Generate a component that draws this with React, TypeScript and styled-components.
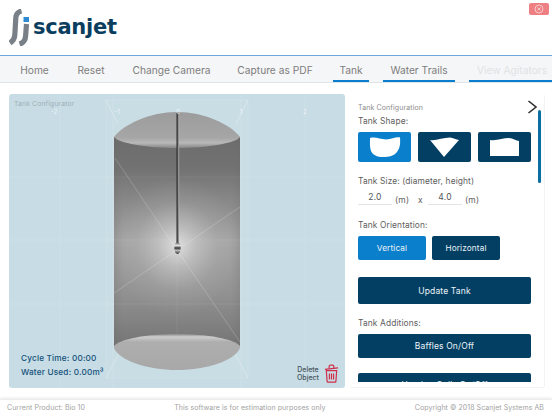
import React from "react";
import styled, { createGlobalStyle } from "styled-components";

const Global = createGlobalStyle`
  html, body { margin: 0; padding: 0; background: #fff; }
  body { font-family: "Inter", "Open Sans", sans-serif; overflow: hidden; }
  * { box-sizing: border-box; }
`;
const Page = styled.div`
  width: 552px; height: 414px; display: flex; flex-direction: column; background: #fff; overflow: hidden;
`;
const Header = styled.header`
  height: 55px; flex: none; display: flex; justify-content: space-between; align-items: flex-start;
  padding: 3px 3px 0 9px;
`;
const Logo = styled.div`
  display: flex; align-items: flex-start; padding-top: 6px; gap: 3px;
`;
const LogoText = styled.span`
  font-family: "DejaVu Sans", sans-serif; font-weight: 700; font-size: 21px; line-height: 24px;
  letter-spacing: -0.25px; color: #0b3e5e; margin-top: 6px;
`;
const CloseButton = styled.div`
  width: 20px; height: 12px; border-radius: 2px; background: #ee7f82; display: flex; align-items: center; justify-content: center;
`;
const Nav = styled.nav`
  height: 28px; flex: none; display: flex; gap: 14px; padding-left: 13px; overflow: hidden;
  background: #f5f6f7; border-top: 1px solid #6ea8d8; border-bottom: 1px solid #dce6eb;
`;
const Tab = styled.div<{ $active?: boolean; $dim?: boolean; $w: number }>`
  flex: none; width: ${p => p.$w}px; height: 27px; display: flex; align-items: center; justify-content: center;
  font-size: 10.2px; font-weight: 400; letter-spacing: 0.02px; white-space: nowrap; padding-top: 3px;
  color: ${p => (p.$dim ? "#dfe3e5" : "#7d7d7d")};
  border-bottom: 3px solid ${p => (p.$active ? "#0a7dcf" : "transparent")};
`;
const Main = styled.main`
  flex: none; height: 316px; padding: 11px 7px 0 9px; display: flex; gap: 4px;
`;
const Stage = styled.section`
  position: relative; width: 336px; height: 294px; border-radius: 3px; background: #c7dce4; overflow: hidden;
`;
const StageTitle = styled.div`
  position: absolute; left: 5px; top: 5px; font-size: 6.8px; font-weight: 400; letter-spacing: 0.15px; color: #9fb0b8;
`;
const Stats = styled.div`
  position: absolute; left: 12px; bottom: 10px; display: flex; flex-direction: column; gap: 3px;
  font-size: 8.2px; font-weight: 500; letter-spacing: 0.2px; line-height: 11px; color: #13517a;
`;
const DeleteBox = styled.div`
  position: absolute; right: 6px; bottom: 5px; display: flex; align-items: center; gap: 5px;
`;
const DeleteLabel = styled.div`
  font-size: 7px; font-weight: 500; line-height: 7.5px; text-align: center; color: #46545c;
`;
const Card = styled.aside`
  position: relative; width: 196px; height: 294px; border-radius: 3px; background: #fff;
  border-right: 1px solid #f2f3f4; border-bottom: 1px solid #f2f3f4;
  padding: 9px 0 0 9px;
`;
const ScrollArea = styled.div`
  height: 279px; overflow: hidden;
`;
const CardTitle = styled.div`
  font-size: 7px; font-weight: 400; letter-spacing: 0.12px; line-height: 9px; color: #8c8c8c;
`;
const Chevron = styled.div`
  position: absolute; right: 6px; top: 6px; line-height: 0;
`;
const Scrollbar = styled.div`
  position: absolute; left: 189px; top: 16px; width: 3px; height: 73px; border-radius: 2px; background: #0b6ea3;
`;
const Label = styled.div<{ $top: number }>`
  margin-top: ${p => p.$top}px; font-size: 8.4px; font-weight: 400; letter-spacing: 0.12px; line-height: 11px; color: #5e5e5e;
`;
const Shapes = styled.div`
  display: flex; gap: 7px; margin-top: 5px;
`;
const ShapeButton = styled.div<{ $active?: boolean }>`
  width: 53px; height: 30px; border-radius: 2px; display: flex; align-items: center; justify-content: center;
  background: ${p => (p.$active ? "#0a80cc" : "#033f63")};
`;
const SizeRow = styled.div`
  display: flex; align-items: flex-end; margin-top: 5px; height: 13px;
  font-size: 8.5px; font-weight: 400; color: #5e5e5e; letter-spacing: 0.2px;
`;
const SizeInput = styled.div`
  width: 34px; height: 13px; border-bottom: 1px solid #e4e4e4; text-align: center; line-height: 11px; color: #555;
`;
const Unit = styled.span<{ $w: number }>`
  width: ${p => p.$w}px; padding-left: 3px; line-height: 10px; flex: none;
`;
const Orientation = styled.div`
  display: flex; gap: 6px; margin-top: 5px;
`;
const ToggleButton = styled.div<{ $active?: boolean }>`
  width: 68px; height: 24px; border-radius: 2px; display: flex; align-items: center; justify-content: center;
  font-size: 8.2px; font-weight: 400; letter-spacing: 0.15px; color: #eaf3f8;
  background: ${p => (p.$active ? "#0a80cc" : "#033f63")};
`;
const WideButton = styled.div<{ $h: number; $top: number }>`
  width: 173px; height: ${p => p.$h}px; margin-top: ${p => p.$top}px; flex: none; border-radius: 2px;
  display: flex; align-items: center; justify-content: center;
  font-size: 8.5px; font-weight: 400; letter-spacing: 0.15px; color: #eaf3f8; background: #033f63;
`;
const Footer = styled.footer`
  flex: 1; display: flex; justify-content: space-between; align-items: center; padding: 0 8px 0 7px;
  box-shadow: 0 -1px 3px rgba(0,0,0,.09); border-top: 1px solid #ececec;
  font-size: 7px; letter-spacing: 0.06px; color: #a2a2a2;
`;

const LogoMark = () => (
  <svg width="21" height="37" viewBox="0 0 21 37">
    <path d="M12.5 2C8.5 3 7 5 6.8 9L5.8 26C5.6 30 4 32 1 34" fill="none" stroke="#7a8087" strokeWidth="5.2" />
    <path d="M17.5 15L16.6 27C16.3 31.5 14 34 10.5 35" fill="none" stroke="#7a8087" strokeWidth="5.2" />
    <rect x="14.5" y="8" width="5.5" height="5" fill="#2e8bd3" />
  </svg>
);

const Scene = () => (
  <svg width="336" height="294" viewBox="9 94 336 294" style={{ position: "absolute", left: 0, top: 0 }}>
    <defs>
      <linearGradient id="body" x1="0" y1="0" x2="0" y2="1">
        <stop offset="0" stopColor="#6c6c6c" />
        <stop offset=".15" stopColor="#727272" />
        <stop offset=".5" stopColor="#a6a6a6" />
        <stop offset=".75" stopColor="#929292" />
        <stop offset="1" stopColor="#747474" />
      </linearGradient>
      <linearGradient id="side" x1="0" y1="0" x2="1" y2="0">
        <stop offset="0" stopColor="#666" stopOpacity=".22" />
        <stop offset=".08" stopColor="#777" stopOpacity=".03" />
        <stop offset=".92" stopColor="#777" stopOpacity=".03" />
        <stop offset="1" stopColor="#666" stopOpacity=".22" />
      </linearGradient>
      <radialGradient id="glow" gradientUnits="userSpaceOnUse" cx="177" cy="246" r="70" gradientTransform="translate(177 246) scale(.9 1) translate(-177 -246)">
        <stop offset="0" stopColor="#f2f2f2" stopOpacity=".75" />
        <stop offset=".3" stopColor="#e2e2e2" stopOpacity=".42" />
        <stop offset=".65" stopColor="#d2d2d2" stopOpacity=".12" />
        <stop offset="1" stopColor="#ccc" stopOpacity="0" />
      </radialGradient>
      <linearGradient id="lid" x1="0" y1="0" x2="0" y2="1">
        <stop offset="0" stopColor="#9c9c9c" />
        <stop offset=".72" stopColor="#a6a6a6" />
        <stop offset=".86" stopColor="#b8b8b8" />
        <stop offset="1" stopColor="#868686" />
      </linearGradient>
      <linearGradient id="base" x1="0" y1="0" x2="0" y2="1">
        <stop offset="0" stopColor="#8a8a8a" />
        <stop offset=".08" stopColor="#cdcdcd" />
        <stop offset=".22" stopColor="#aeaeae" />
        <stop offset="1" stopColor="#a8a8a8" />
      </linearGradient>
      <linearGradient id="rod" x1="0" y1="0" x2="1" y2="0">
        <stop offset="0" stopColor="#2a2a2a" />
        <stop offset=".55" stopColor="#555" />
        <stop offset="1" stopColor="#d0d0d0" />
      </linearGradient>
      <linearGradient id="nozzle" x1="0" y1="0" x2="0" y2="1">
        <stop offset="0" stopColor="#555" />
        <stop offset=".3" stopColor="#e8e8e8" />
        <stop offset=".5" stopColor="#333" />
        <stop offset=".7" stopColor="#bbb" />
        <stop offset="1" stopColor="#333" />
      </linearGradient>
    </defs>
    <g stroke="#ffffff" strokeOpacity=".12" strokeWidth="1" fill="none">
      <path d="M60 94V388M113 94V388M241 94V388M305 94V388" />
      <path d="M9 177H345M9 240H345M9 304H345" />
      <path d="M106 100H248V378H106Z" fill="#fff" fillOpacity=".05" />
      <path d="M106 100L118 124M248 100L236 124M106 378L120 352M248 378L234 352" strokeOpacity=".3" />
    </g>
    <path d="M114 137H240V347H114Z" fill="url(#body)" />
    <path d="M114 137H240V347H114Z" fill="url(#side)" />
    <path d="M114 137H240V347H114Z" fill="url(#glow)" />
    <g stroke="#fff" fill="none">
      <path d="M115 158L177 250L240 342M114 293L177 250L240 207" strokeOpacity=".2" />
      <path d="M114 177H240M114 240H240M114 304H240M177 250V340" strokeOpacity=".07" />
    </g>
    <path d="M114 137C124 124 150 112 177 112C204 112 230 124 240 137C236 143 208 148 177 148C146 148 118 143 114 137Z" fill="url(#lid)" />
    <path d="M114 346C120 339 146 334 177 334C208 334 234 339 240 346V348C235 360 208 370 177 370C146 370 119 360 114 348Z" fill="url(#base)" />
    <rect x="176.5" y="113" width="2.6" height="130" fill="url(#rod)" />
    <ellipse cx="177.5" cy="248" rx="3.2" ry="6" fill="url(#nozzle)" />
    <g fontFamily="Inter, sans-serif" fontSize="6.5" fill="#fff" fillOpacity=".7" textAnchor="middle">
      <text x="54" y="114">-2</text>
      <text x="117" y="114">-1</text>
      <text x="178" y="114">0</text>
      <text x="241" y="114">1</text>
      <text x="305" y="114">2</text>
    </g>
  </svg>
);

export default function App() {
  return (
    <Page>
      <Global />
      <Header>
        <Logo>
          <LogoMark />
          <LogoText>scanjet</LogoText>
        </Logo>
        <CloseButton>
          <svg width="10" height="10" viewBox="0 0 10 10" fill="none" stroke="#f6c9ca" strokeWidth="1">
            <circle cx="5" cy="5" r="4" />
            <path d="M3.4 3.4L6.6 6.6M6.6 3.4L3.4 6.6" />
          </svg>
        </CloseButton>
      </Header>
      <Nav>
        <Tab $w={43}>Home</Tab>
        <Tab $w={42}>Reset</Tab>
        <Tab $w={91}>Change Camera</Tab>
        <Tab $w={88}>Capture as PDF</Tab>
        <Tab $w={36} $active>Tank</Tab>
        <Tab $w={72} $active>Water Trails</Tab>
        <Tab $w={86} $active $dim>View Agitators</Tab>
      </Nav>
      <Main>
        <Stage>
          <Scene />
          <StageTitle>Tank Configurator</StageTitle>
          <Stats>
            <div>Cycle Time: 00:00</div>
            <div>Water Used: 0.00m³</div>
          </Stats>
          <DeleteBox>
            <DeleteLabel>Delete<br />Object</DeleteLabel>
            <svg width="15" height="19" viewBox="0 0 16 20" fill="none" stroke="#cf2f4b" strokeWidth="1.3">
              <path d="M1 5.5L15 4" />
              <path d="M5.5 4.5V2.5C5.5 1.5 6 1 7 1H9C10 1 10.5 1.5 10.5 2.5V4" />
              <path d="M2.5 7H13.5L12.7 18.5C12.6 19 12.3 19.3 11.8 19.3H4.2C3.7 19.3 3.4 19 3.3 18.5Z" />
              <path d="M5.8 10V16.5M8 10V16.5M10.2 10V16.5" />
            </svg>
          </DeleteBox>
        </Stage>
        <Card>
          <Chevron>
            <svg width="11" height="14" viewBox="0 0 11 14" fill="none" stroke="#2e2e2e" strokeWidth="1.6">
              <path d="M1.5 1L9 7L1.5 13" />
            </svg>
          </Chevron>
          <Scrollbar />
          <ScrollArea>
            <CardTitle>Tank Configuration</CardTitle>
            <Label $top={4}>Tank Shape:</Label>
            <Shapes>
              <ShapeButton $active>
                <svg width="32" height="22" viewBox="0 0 32 22" fill="#fff">
                  <path d="M1 2C7 0.5 11 3.5 17 3.5C23 3.5 27 0.5 31 1.5C31.5 8 31 12 28 16C25 20 20 21 14 21C8 21 4 19 2 15C0.5 11 1 6 1 2Z" />
                </svg>
              </ShapeButton>
              <ShapeButton>
                <svg width="31" height="21" viewBox="0 0 31 21" fill="#fff">
                  <path d="M1 3C7 4 14 0.5 21 0.5C24 0.5 27 3 30 3L15 20Z" />
                </svg>
              </ShapeButton>
              <ShapeButton>
                <svg width="31" height="20" viewBox="0 0 31 20" fill="#fff">
                  <path d="M1 3C8 4 14 1 20 1C24 1 27 4 30 4V19H1Z" />
                </svg>
              </ShapeButton>
            </Shapes>
            <Label $top={14}>Tank Size: (diameter, height)</Label>
            <SizeRow>
              <SizeInput>2.0</SizeInput>
              <Unit $w={23}>(m)</Unit>
              <Unit $w={13}>x</Unit>
              <SizeInput>4.0</SizeInput>
              <Unit $w={26}>(m)</Unit>
            </SizeRow>
            <Label $top={15}>Tank Orientation:</Label>
            <Orientation>
              <ToggleButton $active>Vertical</ToggleButton>
              <ToggleButton>Horizontal</ToggleButton>
            </Orientation>
            <WideButton $h={27} $top={17}>Update Tank</WideButton>
            <Label $top={14}>Tank Additions:</Label>
            <WideButton $h={24} $top={5}>Baffles On/Off</WideButton>
            <WideButton $h={24} $top={15}>Heating Coils On/Off</WideButton>
          </ScrollArea>
        </Card>
      </Main>
      <Footer>
        <div>Current Product: Bio 10</div>
        <div>This software is for estimation purposes only</div>
        <div>Copyright © 2018 Scanjet Systems AB</div>
      </Footer>
    </Page>
  );
}
